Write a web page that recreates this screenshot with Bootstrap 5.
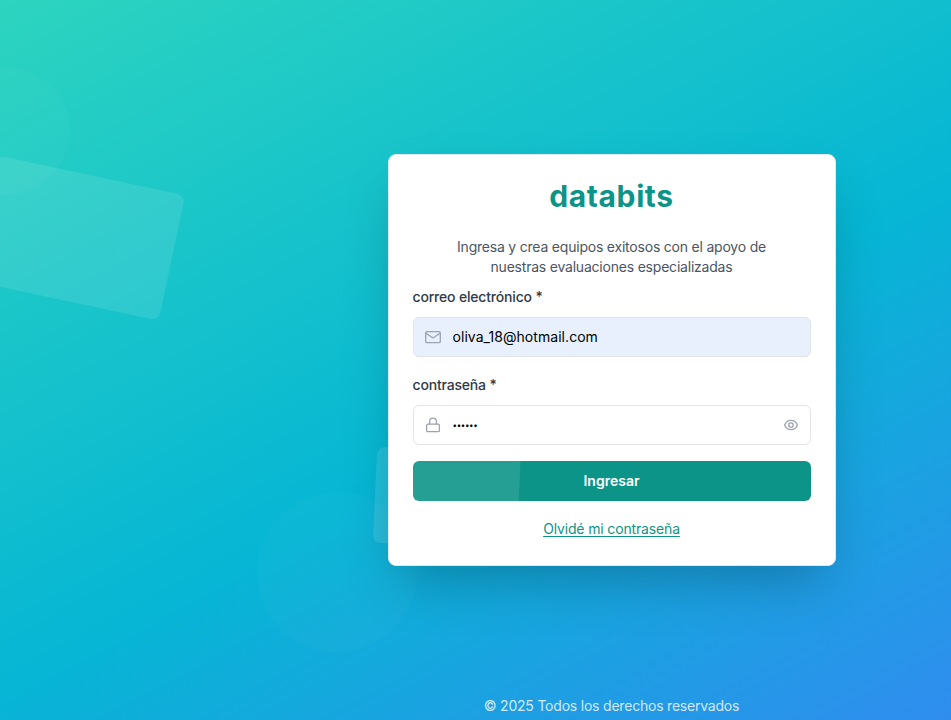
<!DOCTYPE html>
<html lang="es">
<head>
<meta charset="utf-8">
<meta name="viewport" content="width=device-width, initial-scale=1">
<title>databits</title>
<link href="https://cdn.jsdelivr.net/npm/bootstrap@5.3.0/dist/css/bootstrap.min.css" rel="stylesheet">
<style>
  body { font-family: Inter, "Liberation Sans", sans-serif; font-size: 14px; line-height: 20px; letter-spacing: -.21px; }
  .stage { width: 1223px; height: 720px; background: linear-gradient(152deg, #2dd4bf, #06b6d4, #3b82f6); }
  .viewport { width: 100%; height: 720px; }
  .login-card { width: 448px; height: 412px; padding: 23px 24px; border: 1px solid #e2e8f0; border-radius: 8px; box-shadow: 0 25px 50px -12px rgba(0,0,0,.25); }
  .brand { font-size: 30px; line-height: 36px; font-weight: 700; color: #0d9488; margin-bottom: 23px; letter-spacing: .6px; }
  .intro { color: #4b5563; margin-bottom: 10px; }
  .form-label { color: #303947; font-weight: 500; margin-bottom: 10px; letter-spacing: -.18px; }
  .field { height: 40px; border: 1px solid #e2e4e8; border-radius: 6px; padding: 0 11px; color: #9ca3af; }
  .field.filled { background: #e8f0fe; margin-bottom: 18px; }
  .field .form-control { color: #000; font-size: 14px; line-height: 20px; background: transparent; box-shadow: none; letter-spacing: .05px; }
  .field .form-control.secret { font-size: 8px; letter-spacing: -.35px; }
  .btn-enter { height: 40px; background: #0d9488; color: #fff; font-size: 14px; line-height: 20px; font-weight: 600; border: 0; border-radius: 6px; margin-bottom: 18px; }
  .forgot { color: #0d9488; text-underline-offset: 2px; letter-spacing: -.15px; }
  .legal { color: rgba(255,255,255,.8); bottom: 4px; }
  .shape { pointer-events: none; background: rgba(255,255,255,.1); border-radius: 8px; }
  .ball { background: rgba(255,255,255,.022); border-radius: 50%; }
  .ball-a { left: -58px; top: 67px; width: 128px; height: 128px; }
  .ball-b { left: 257px; top: 492px; width: 160px; height: 160px; }
  .slab-a { left: -17.7px; top: 174px; width: 192px; height: 128px; transform: rotate(12deg); }
  .slab-b { left: 375px; top: 447px; width: 144px; height: 96px; transform: skewX(-2.7deg); z-index: 2; }
</style>
<script src="https://cdn.jsdelivr.net/npm/bootstrap@5.3.0/dist/js/bootstrap.bundle.min.js"></script>
</head>
<body class="overflow-hidden">
<div class="viewport overflow-hidden">
  <main class="stage position-relative d-flex flex-column align-items-center">
    <div class="shape ball ball-a position-absolute"></div>
    <div class="shape ball ball-b position-absolute"></div>
    <div class="shape slab-a position-absolute"></div>
    <div class="shape slab-b position-absolute"></div>
    <section class="login-card bg-white my-auto flex-shrink-0 position-relative">
      <h1 class="brand text-center">databits</h1>
      <p class="intro text-center">Ingresa y crea equipos exitosos con el apoyo de<br>nuestras evaluaciones especializadas</p>
      <form>
        <label class="form-label d-block" for="mail">correo electrónico *</label>
        <div class="field filled d-flex align-items-center">
          <svg class="flex-shrink-0" width="16" height="16" viewBox="0 0 16 16" fill="none" stroke="currentColor" stroke-width="1.3" stroke-linecap="round" stroke-linejoin="round"><rect x=".7" y="2.7" width="14.6" height="11" rx="1.3"/><path d="M1 4.3 7.2 8.5a1.4 1.4 0 0 0 1.6 0L15 4.3"/></svg>
          <input class="form-control border-0 py-0" id="mail" type="text" value="oliva_18@hotmail.com">
        </div>
        <label class="form-label d-block" for="pass">contraseña *</label>
        <div class="field d-flex align-items-center mb-3">
          <svg class="flex-shrink-0" width="16" height="16" viewBox="0 0 16 16" fill="none" stroke="currentColor" stroke-width="1.3" stroke-linecap="round" stroke-linejoin="round"><rect x="1.6" y="7.1" width="12.8" height="7.6" rx="1.3"/><path d="M4.6 7.1V4.6a3.4 3.4 0 0 1 6.8 0v2.5"/></svg>
          <input class="form-control secret border-0 py-0" id="pass" type="password" value="123456">
          <svg class="flex-shrink-0" width="16" height="16" viewBox="0 0 16 16" fill="none" stroke="currentColor" stroke-width="1.3" stroke-linecap="round" stroke-linejoin="round"><path d="M1.6 8C2.7 4.9 5.1 3.3 8 3.3S13.3 4.9 14.4 8C13.3 11.1 10.9 12.7 8 12.7S2.7 11.1 1.6 8Z"/><circle cx="8" cy="8" r="2.2"/></svg>
        </div>
        <button class="btn btn-enter w-100" type="button">Ingresar</button>
        <div class="text-center"><a class="forgot" href="#">Olvidé mi contraseña</a></div>
      </form>
    </section>
    <footer class="legal position-absolute">© 2025 Todos los derechos reservados</footer>
  </main>
</div>
</body>
</html>
